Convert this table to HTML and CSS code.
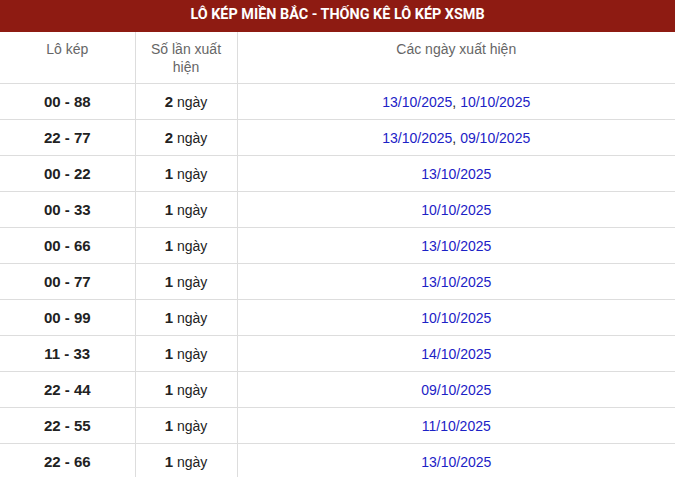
FILE: index.html
```html
<!DOCTYPE html>
<html lang="vi">
<head>
<meta charset="utf-8">
<link rel="stylesheet" href="styles.css">
</head>
<body>
<div class="box">
  <h2 class="title">LÔ KÉP MIỀN BẮC - THỐNG KÊ LÔ KÉP XSMB</h2>
  <table class="tbl">
    <colgroup><col class="c1"><col class="c2"><col class="c3"></colgroup>
    <thead>
      <tr><th>Lô kép</th><th>Số lần xuất hiện</th><th>Các ngày xuất hiện</th></tr>
    </thead>
    <tbody>
      <tr><td class="pair">00 - 88</td><td><b>2</b> ngày</td><td><span class="d">13/10/2025</span>, <span class="d">10/10/2025</span></td></tr>
      <tr><td class="pair">22 - 77</td><td><b>2</b> ngày</td><td><span class="d">13/10/2025</span>, <span class="d">09/10/2025</span></td></tr>
      <tr><td class="pair">00 - 22</td><td><b>1</b> ngày</td><td><span class="d">13/10/2025</span></td></tr>
      <tr><td class="pair">00 - 33</td><td><b>1</b> ngày</td><td><span class="d">10/10/2025</span></td></tr>
      <tr><td class="pair">00 - 66</td><td><b>1</b> ngày</td><td><span class="d">13/10/2025</span></td></tr>
      <tr><td class="pair">00 - 77</td><td><b>1</b> ngày</td><td><span class="d">13/10/2025</span></td></tr>
      <tr><td class="pair">00 - 99</td><td><b>1</b> ngày</td><td><span class="d">10/10/2025</span></td></tr>
      <tr><td class="pair">11 - 33</td><td><b>1</b> ngày</td><td><span class="d">14/10/2025</span></td></tr>
      <tr><td class="pair">22 - 44</td><td><b>1</b> ngày</td><td><span class="d">09/10/2025</span></td></tr>
      <tr><td class="pair">22 - 55</td><td><b>1</b> ngày</td><td><span class="d">11/10/2025</span></td></tr>
      <tr><td class="pair">22 - 66</td><td><b>1</b> ngày</td><td><span class="d">13/10/2025</span></td></tr>
    </tbody>
  </table>
</div>
</body>
</html>
```
FILE: styles.css
```css
html, body {
  margin: 0;
  padding: 0;
  background: #fff;
}
body {
  font-family: "Liberation Sans", Arial, sans-serif;
  color: #222;
}
.box {
  width: 675px;
}
.title {
  margin: 0;
  height: 32px;
  line-height: 30px;
  background: #8e1b12;
  color: #fff;
  font-family: Roboto, "Liberation Sans", sans-serif;
  font-weight: 700;
  font-size: 14.4px;
  text-align: center;
}
.tbl {
  width: 675px;
  border-collapse: collapse;
  table-layout: fixed;
}
.c1 { width: 135px; }
.c2 { width: 102px; }
.tbl th {
  font-weight: 400;
  font-size: 14px;
  color: #666;
  line-height: 18px;
  padding: 8px 8px 7px;
  vertical-align: top;
  border: 1px solid #ddd;
  border-top: none;
}
.tbl td {
  height: 36px;
  padding: 0 4px;
  box-sizing: border-box;
  text-align: center;
  font-size: 14px;
  color: #222;
  border: 1px solid #ddd;
}
.tbl th:first-child, .tbl td:first-child { border-left: none; }
.tbl th:last-child, .tbl td:last-child { border-right: none; }
.tbl td.pair {
  font-weight: 700;
  font-size: 15px;
}
.tbl td b {
  font-size: 15px;
}
.d {
  color: #1c22c6;
}
```
